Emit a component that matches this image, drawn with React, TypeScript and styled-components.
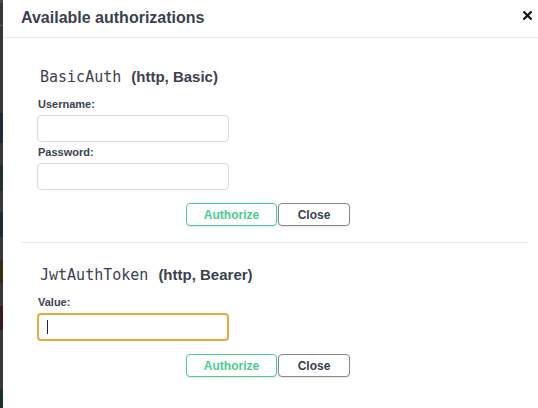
import styled, { createGlobalStyle } from 'styled-components'

const GlobalStyle = createGlobalStyle`
  html, body {
    margin: 0;
    padding: 0;
    background: #fff;
  }
  body {
    font-family: "Liberation Sans", Arial, sans-serif;
    color: #3b4151;
  }
  * {
    box-sizing: border-box;
  }
`

const Page = styled.div`
  display: flex;
  width: 538px;
  height: 408px;
  overflow: hidden;
`

const Backdrop = styled.div`
  width: 3px;
  display: flex;
  flex-direction: column;
  background: #383838;
`

const Shade = styled.div<{ $h: number; $color?: string }>`
  height: ${({ $h }) => $h}px;
  flex-shrink: 0;
  background: ${({ $color }) => $color || 'transparent'};
`

const Modal = styled.div`
  flex: 1;
  display: flex;
  flex-direction: column;
  background: #fff;
`

const Header = styled.div`
  height: 38px;
  display: flex;
  align-items: center;
  justify-content: space-between;
  padding: 0 6px 2px 18px;
  border-bottom: 1px solid #ebebeb;
`

const Title = styled.h3`
  margin: 0;
  font-size: 16px;
  font-weight: 700;
  color: #3b4151;
`

const CloseIcon = styled.button`
  border: none;
  background: none;
  padding: 0;
  width: 9px;
  height: 9px;
  margin-bottom: 5px;
  display: flex;
  cursor: pointer;
`

const Content = styled.div`
  padding: 0 10px 0 18px;
`

const AuthBlock = styled.div<{ $last?: boolean; $top: number }>`
  padding: ${({ $top }) => $top}px 0 0 16px;
  border-bottom: ${({ $last }) => ($last ? 'none' : '1px solid #ebebeb')};
  padding-bottom: ${({ $last }) => ($last ? '0' : '16px')};
`

const SchemeTitle = styled.h4`
  margin: 0 0 12px 0;
  display: flex;
  align-items: baseline;
  gap: 10px;
  font-size: 15px;
  line-height: 18px;
  font-weight: 700;
  color: #3b4151;
  padding-left: 3px;
`

const SchemeName = styled.code`
  font-family: "DejaVu Sans Mono", monospace;
  font-size: 15px;
  font-weight: 400;
  color: #3b4151;
`

const Label = styled.label`
  display: block;
  font-size: 11px;
  line-height: 13px;
  font-weight: 700;
  color: #3b4151;
  margin: 0 0 4px 1px;
`

const Field = styled.div`
  margin-bottom: 4px;
`

const Input = styled.div<{ $focused?: boolean }>`
  width: 192px;
  height: ${({ $focused }) => ($focused ? '28px' : '27px')};
  border-radius: 4px;
  border: ${({ $focused }) => ($focused ? '2px solid #e9a83c' : '1px solid #d9d9d9')};
  background: #fff;
  display: flex;
  align-items: center;
  padding-left: ${({ $focused }) => ($focused ? '8px' : '9px')};
`

const Caret = styled.span`
  width: 1px;
  height: 14px;
  background: #222;
`

const BtnRow = styled.div`
  display: flex;
  justify-content: center;
  gap: 1px;
  padding: 9px 29px 0 0;
`

const Btn = styled.button<{ $primary?: boolean }>`
  height: 23px;
  width: ${({ $primary }) => ($primary ? '91px' : '72px')};
  border-radius: 4px;
  background: #fff;
  font-family: "Liberation Sans", Arial, sans-serif;
  font-size: 12px;
  font-weight: 700;
  border: ${({ $primary }) => ($primary ? '1.5px solid #49cc90' : '1.5px solid #888')};
  color: ${({ $primary }) => ($primary ? '#49cc90' : '#3b4151')};
  box-shadow: 0 1px 2px rgba(0, 0, 0, 0.1);
  cursor: pointer;
  padding: 0;
`

const shades: { h: number; c?: string }[] = [
  { h: 3, c: '#4a4a4a' },
  { h: 22 },
  { h: 1, c: '#555' },
  { h: 87 },
  { h: 30, c: '#1c2b3a' },
  { h: 22 },
  { h: 26, c: '#1b3327' },
  { h: 21 },
  { h: 25, c: '#1c2b3a' },
  { h: 23 },
  { h: 23, c: '#3a2c14' },
  { h: 23 },
  { h: 24, c: '#3c1a1c' },
  { h: 60 },
  { h: 18, c: '#1b3327' },
]

export default function App() {
  return (
    <>
      <GlobalStyle />
      <Page>
        <Backdrop>
          {shades.map((s, i) => (
            <Shade key={i} $h={s.h} $color={s.c} />
          ))}
        </Backdrop>
        <Modal>
          <Header>
            <Title>Available authorizations</Title>
            <CloseIcon aria-label="Close">
              <svg width="9" height="9" viewBox="0 0 9 9">
                <path d="M1.2 1.2l6.6 6.6M7.8 1.2l-6.6 6.6" stroke="#111" strokeWidth="2.2" strokeLinecap="square" />
              </svg>
            </CloseIcon>
          </Header>
          <Content>
            <AuthBlock $top={30}>
              <SchemeTitle>
                <SchemeName>BasicAuth</SchemeName>
                <span>(http, Basic)</span>
              </SchemeTitle>
              <Field>
                <Label>Username:</Label>
                <Input />
              </Field>
              <Field>
                <Label>Password:</Label>
                <Input />
              </Field>
              <BtnRow>
                <Btn $primary>Authorize</Btn>
                <Btn>Close</Btn>
              </BtnRow>
            </AuthBlock>
            <AuthBlock $last $top={23}>
              <SchemeTitle>
                <SchemeName>JwtAuthToken</SchemeName>
                <span>(http, Bearer)</span>
              </SchemeTitle>
              <Field>
                <Label>Value:</Label>
                <Input $focused>
                  <Caret />
                </Input>
              </Field>
              <BtnRow>
                <Btn $primary>Authorize</Btn>
                <Btn>Close</Btn>
              </BtnRow>
            </AuthBlock>
          </Content>
        </Modal>
      </Page>
    </>
  )
}
